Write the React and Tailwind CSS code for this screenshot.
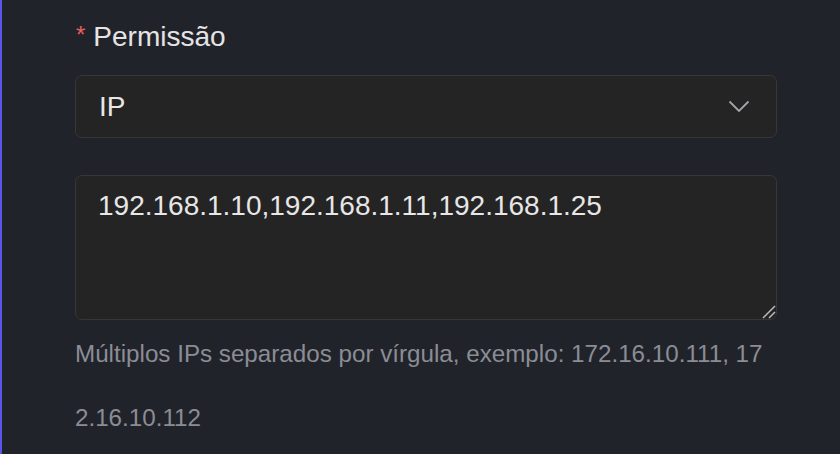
import React from "react";

export default function App() {
  return (
    <div className="w-[840px] h-[454px] bg-[#21232b] overflow-hidden flex font-['Liberation_Sans',Arial,sans-serif]">
      <div className="w-[2px] h-full bg-[#5a55e8] shrink-0" />
      <div className="pl-[73px] w-[775px] shrink-0">
        <div className="pt-[16px] leading-[42px] text-[28px] text-[#e6e3e4] flex items-center">
          <span className="text-[#e5605c] text-[24px] ml-[1px] mr-[8px] relative top-[-2px]">*</span>
          <span>Permissão</span>
        </div>
        <div className="mt-[17px] h-[63px] rounded-[7px] border border-[#3a3539] bg-[#242424] flex items-center justify-between pl-[23px] pr-[26px]">
          <span className="text-[28px] text-[#e8e6e6] leading-none">IP</span>
          <svg width="22" height="13" viewBox="0 0 22 13" fill="none">
            <path d="M1.5 1.5 L11 11 L20.5 1.5" stroke="#a3a3ab" strokeWidth="1.8" />
          </svg>
        </div>
        <div className="mt-[37px] relative">
          <textarea
            className="block w-full h-[145px] rounded-[7px] border border-[#3a3539] bg-[#242424] text-[28px] leading-[40px] text-[#e8e6e6] pt-[10px] pl-[22px] pr-[23px] outline-none resize-none"
            defaultValue="192.168.1.10,192.168.1.11,192.168.1.25"
          />
          <svg className="absolute right-[1px] bottom-[1px]" width="14" height="14" viewBox="0 0 14 14" fill="none">
            <path d="M1 13 L13 1" stroke="#b5b5b8" strokeWidth="1.6" />
            <path d="M7 13 L13 7" stroke="#b5b5b8" strokeWidth="1.6" />
          </svg>
        </div>
        <div className="mt-[2px] w-[695px] text-[24.2px] leading-[64px] text-[#8b8d94] break-all">
          Múltiplos IPs separados por vírgula, exemplo: 172.16.10.111, 172.16.10.112
        </div>
      </div>
    </div>
  );
}
